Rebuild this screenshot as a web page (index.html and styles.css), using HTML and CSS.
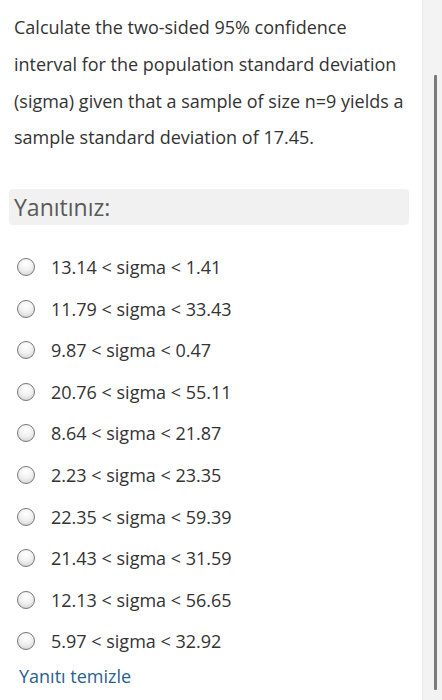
FILE: index.html
```html
<!DOCTYPE html>
<html lang="tr">
<head>
<meta charset="utf-8">
<link rel="stylesheet" href="styles.css">
</head>
<body>
<div class="page">
  <main class="content">
    <p class="question">Calculate the two-sided 95% confidence interval for the population standard deviation (sigma) given that a sample of size n=9 yields a sample standard deviation of 17.45.</p>
    <div class="prompt">Yanıtınız:</div>
    <ul class="options">
      <li class="option"><span class="radio"></span><span>13.14 &lt; sigma &lt; 1.41</span></li>
      <li class="option"><span class="radio"></span><span>11.79 &lt; sigma &lt; 33.43</span></li>
      <li class="option"><span class="radio"></span><span>9.87 &lt; sigma &lt; 0.47</span></li>
      <li class="option"><span class="radio"></span><span>20.76 &lt; sigma &lt; 55.11</span></li>
      <li class="option"><span class="radio"></span><span>8.64 &lt; sigma &lt; 21.87</span></li>
      <li class="option"><span class="radio"></span><span>2.23 &lt; sigma &lt; 23.35</span></li>
      <li class="option"><span class="radio"></span><span>22.35 &lt; sigma &lt; 59.39</span></li>
      <li class="option"><span class="radio"></span><span>21.43 &lt; sigma &lt; 31.59</span></li>
      <li class="option"><span class="radio"></span><span>12.13 &lt; sigma &lt; 56.65</span></li>
      <li class="option"><span class="radio"></span><span>5.97 &lt; sigma &lt; 32.92</span></li>
    </ul>
    <a class="clear" href="#">Yanıtı temizle</a>
  </main>
  <aside class="scrollbar"><div class="thumb"></div></aside>
</div>
</body>
</html>
```
FILE: styles.css
```css
html, body {
  margin: 0;
  padding: 0;
  background: #fff;
}
body {
  font-family: "Open Sans", "Noto Sans", sans-serif;
  color: #333;
  width: 442px;
  height: 700px;
  overflow: hidden;
}
.page {
  display: flex;
  height: 700px;
}
.content {
  flex: 1;
  padding: 9px 13px 0 9px;
}
.question {
  margin: 0 -2px 0 5px;
  font-size: 18px;
  line-height: 36.8px;
  color: #333;
}
.prompt {
  margin-top: 33px;
  background: #f1f1f1;
  border-radius: 4px;
  height: 36px;
  line-height: 36px;
  padding-left: 5px;
  font-size: 23px;
  color: #595959;
}
.options {
  list-style: none;
  margin: 21px 0 0 0;
  padding: 0;
}
.option {
  display: flex;
  align-items: center;
  height: 41.6px;
  font-size: 18px;
  color: #333;
}
.radio {
  width: 16px;
  height: 16px;
  border-radius: 50%;
  border: 1px solid #777;
  background: radial-gradient(circle at 50% 30%, #ffffff 0%, #f2f2f2 45%, #cccccc 100%);
  margin-left: 8px;
  margin-right: 16px;
  flex: none;
}
.clear {
  display: block;
  margin: 2px 0 0 10px;
  font-size: 18px;
  color: #2b5f8f;
  text-decoration: none;
}
.scrollbar {
  width: 19px;
  flex: none;
  background: #f3f3f3;
  border-left: 1px solid #ececec;
  position: relative;
}
.thumb {
  position: absolute;
  left: 11px;
  top: 75px;
  width: 3px;
  height: 615px;
  background: #7b7b7b;
  border-radius: 1px;
}
```
